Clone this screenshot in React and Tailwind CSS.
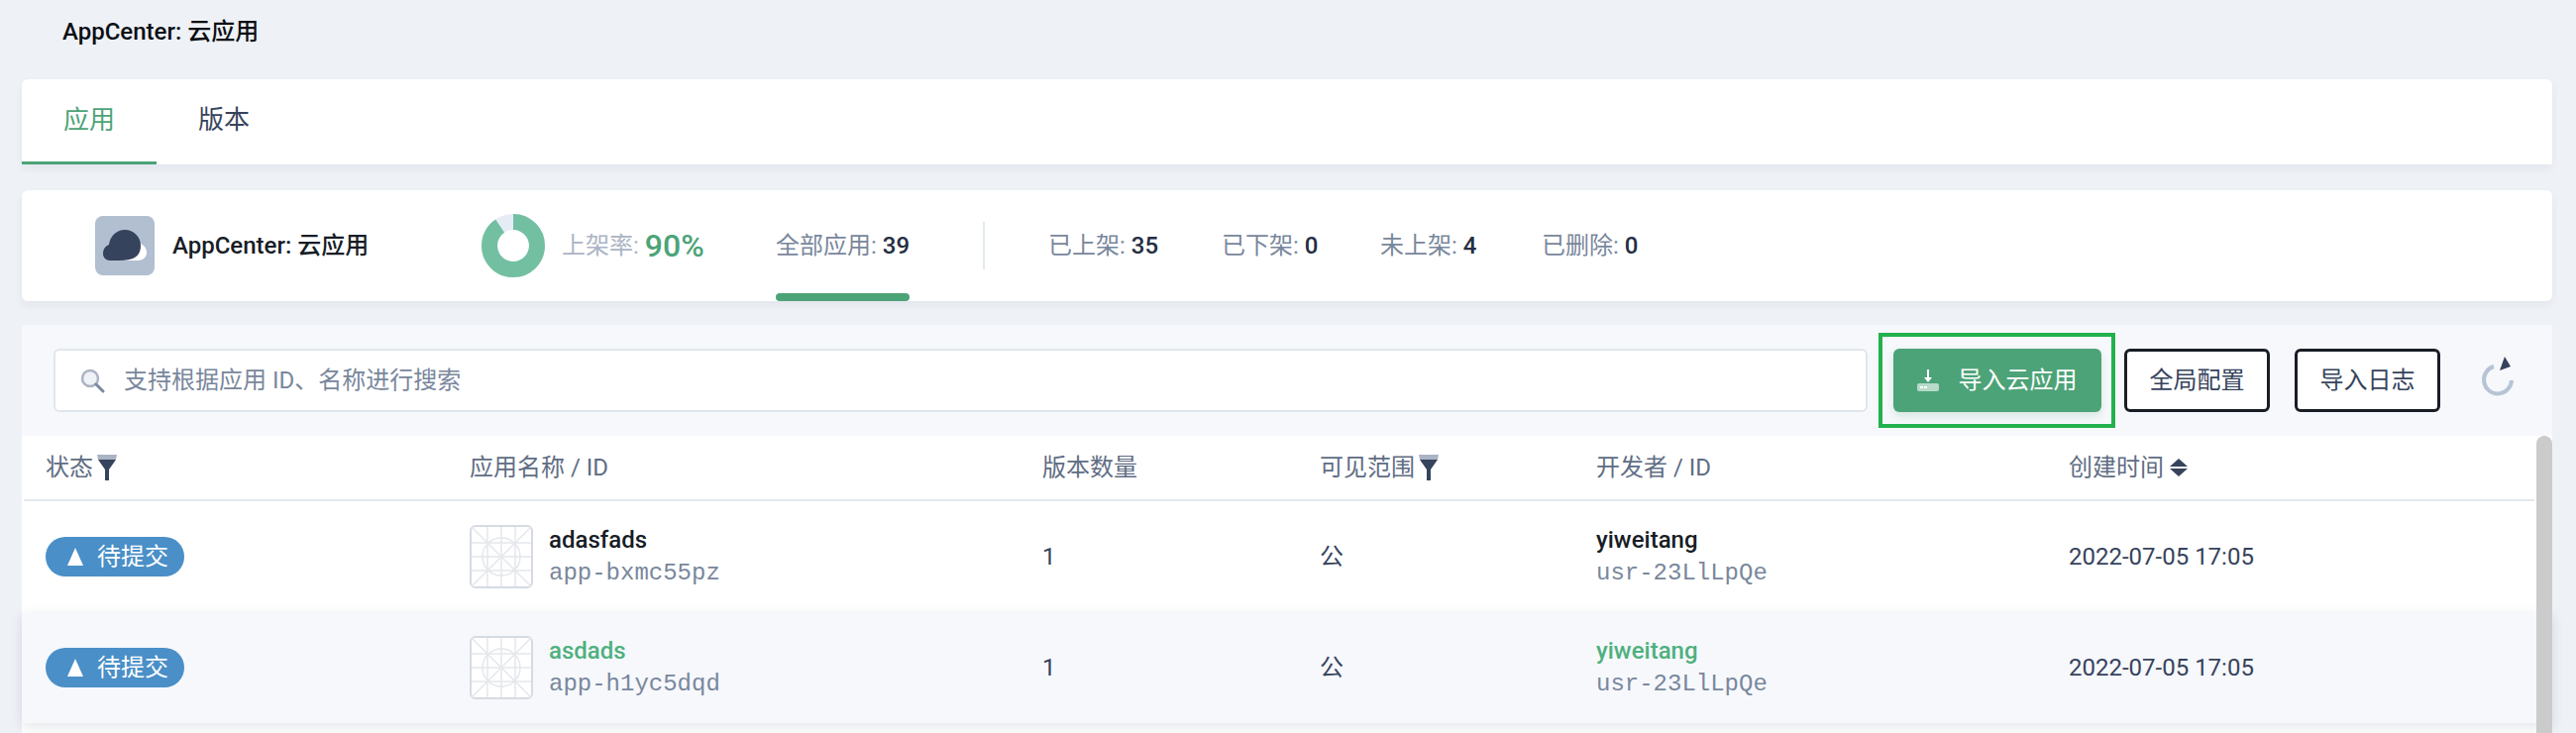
const sans = "font-['Roboto','Noto_Sans_CJK_SC',sans-serif]";

function FilterIcon() {
  return (
    <svg width="20" height="26" viewBox="0 0 20 26" className="shrink-0">
      <path d="M0 0H20L19 5H1Z" fill="#abb4c4" />
      <path d="M1 5H19L12 15V26H8V15Z" fill="#36435c" />
    </svg>
  );
}

function SortIcon() {
  return (
    <svg width="18" height="18" viewBox="0 0 18 18" className="shrink-0">
      <path d="M9 0L18 8H0Z" fill="#36435c" />
      <path d="M0 10H18L9 18Z" fill="#36435c" />
    </svg>
  );
}

function SearchIcon() {
  return (
    <svg width="26" height="26" viewBox="0 0 26 26" fill="none" className="shrink-0">
      <circle cx="11" cy="11" r="8" stroke="#abb4c4" strokeWidth="2.5" fill="#eff2f6" />
      <path d="M17 17L24 24" stroke="#7d8aa0" strokeWidth="3" strokeLinecap="round" />
    </svg>
  );
}

function ImportIcon() {
  return (
    <svg width="22" height="22" viewBox="0 0 22 22" className="shrink-0">
      <path d="M10 0H12V8H15L11 13L7 8H10Z" fill="#fff" />
      <rect x="0" y="14" width="22" height="8" rx="2" fill="#fff" fillOpacity="0.6" />
      <rect x="3" y="17" width="3" height="2" fill="#fff" />
      <rect x="7" y="17" width="3" height="2" fill="#fff" />
    </svg>
  );
}

function RefreshIcon() {
  return (
    <svg width="36" height="40" viewBox="0 0 36 40" fill="none" className="shrink-0">
      <path d="M14 10A14 14 0 1 0 32 24" stroke="#b6c4d6" strokeWidth="4" fill="none" transform="translate(0 0)" />
      <path d="M25 0L31 10L20 14Z" fill="#36435c" />
    </svg>
  );
}

function CloudIcon() {
  return (
    <div className="w-[60px] h-[60px] rounded-[8px] bg-[#b1bfd0] flex items-center justify-center shrink-0">
      <svg width="60" height="60" viewBox="0 0 60 60">
        <path d="M30 45H43C49 45 52 41 52 37C52 33 50 30 46 28L30 28Z" fill="#fff" />
        <path d="M8 38C8 33 11 30 14 29C15 21 21 14 30 14C39 14 46 21 46 30C46 37 43 41 38 43C32 45 26 45 20 45H15C11 45 8 42 8 38Z" fill="#36435c" />
      </svg>
    </div>
  );
}

function Placeholder() {
  return (
    <svg width="64" height="64" viewBox="0 0 64 64" fill="none" className="shrink-0">
      <rect x="1" y="1" width="62" height="62" rx="5" fill="#fff" stroke="#d5dae3" strokeWidth="2" />
      <g stroke="#e4e7ec" strokeWidth="1.5">
        <path d="M2 2L62 62M62 2L2 62" />
        <path d="M18 2V62M32 2V62M46 2V62" />
        <path d="M2 18H62M2 32H62M2 46H62" />
        <circle cx="32" cy="32" r="19" />
      </g>
    </svg>
  );
}

function Donut() {
  return (
    <svg width="64" height="64" viewBox="0 0 64 64" className="shrink-0">
      <circle cx="32" cy="32" r="24" fill="none" stroke="#e5ecf6" strokeWidth="16" />
      <circle
        cx="32"
        cy="32"
        r="24"
        fill="none"
        stroke="#72c0a1"
        strokeWidth="16"
        strokeDasharray="135.7 150.8"
        transform="rotate(-90 32 32)"
      />
    </svg>
  );
}

function Stat({ label, value, className }) {
  return (
    <div className={`text-[24px] text-[#79879c] whitespace-nowrap ${className}`}>
      {label}: <span className="font-medium text-[#242e42]">{value}</span>
    </div>
  );
}

function Badge() {
  return (
    <div className="w-[140px] h-[40px] rounded-full bg-[#4a8fc7] text-white text-[24px] flex items-center pl-[22px] gap-[14px]">
      <svg width="16" height="18" viewBox="0 0 16 18" className="shrink-0">
        <path d="M8 0L16 18H0Z" fill="#fff" />
      </svg>
      <span className="leading-none whitespace-nowrap">待提交</span>
    </div>
  );
}

const cols = "grid grid-cols-[428px_578px_280px_279px_477px_1fr] items-center";

function Row({ name, id, hover }) {
  const nameColor = hover ? "text-[#4fb07e]" : "text-[#181d26]";
  return (
    <div
      className={`${cols} h-[112px] pl-[24px] text-[24px] text-[#36435c] ${
        hover ? "bg-[#f6f8fc] shadow-[0_4px_12px_rgba(36,46,66,0.12)] relative w-full" : "bg-white"
      }`}
    >
      <Badge />
      <div className="flex items-center gap-[16px]">
        <Placeholder />
        <div className="flex flex-col">
          <span className={`font-medium leading-[34px] ${nameColor}`}>{name}</span>
          <span className="font-['Liberation_Mono',monospace] text-[#79879c] leading-[34px]">{id}</span>
        </div>
      </div>
      <div>1</div>
      <div>公</div>
      <div className="flex flex-col">
        <span className={`font-medium leading-[34px] ${nameColor}`}>yiweitang</span>
        <span className="font-['Liberation_Mono',monospace] text-[#79879c] leading-[34px]">usr-23LlLpQe</span>
      </div>
      <div>2022-07-05 17:05</div>
    </div>
  );
}

export default function App() {
  return (
    <div className={`${sans} h-[740px] w-[2600px] overflow-hidden bg-[#eef1f6] pl-[22px] pr-[24px]`}>
      <div className="h-[64px] mb-[16px] pl-[41px] flex items-center text-[24px] font-medium text-[#0c0f14]">
        AppCenter: 云应用
      </div>

      <div className="h-[86px] mb-[26px] bg-white rounded-t-[6px] shadow-[0_4px_8px_rgba(36,46,66,0.06)] flex text-[26px]">
        <div className="w-[136px] flex items-center justify-center text-[#4da378] border-b-[3px] border-[#4da378]">应用</div>
        <div className="w-[136px] flex items-center justify-center text-[#36435c] pb-[3px]">版本</div>
      </div>

      <div className="h-[112px] mb-[24px] bg-white rounded-[6px] shadow-[0_4px_8px_rgba(36,46,66,0.06)] flex items-center pl-[74px]">
        <CloudIcon />
        <div className="ml-[18px] w-[312px] text-[24px] font-medium text-[#181d26] whitespace-nowrap">AppCenter: 云应用</div>
        <Donut />
        <div className="ml-[17px] w-[216px] flex items-center text-[24px] text-[#abb4c4] whitespace-nowrap">
          上架率: <span className="ml-[6px] text-[32px] font-medium text-[#4da378]">90%</span>
        </div>
        <div className="relative h-full w-[209px] flex items-center">
          <Stat label="全部应用" value="39" />
          <div className="absolute left-0 bottom-0 w-[135px] h-[8px] rounded-t-[4px] rounded-b-[4px] bg-[#4da378]" />
        </div>
        <div className="w-[2px] h-[48px] bg-[#e3e9ef] mr-[64px]" />
        <Stat label="已上架" value="35" className="w-[175px]" />
        <Stat label="已下架" value="0" className="w-[160px]" />
        <Stat label="未上架" value="4" className="w-[163px]" />
        <Stat label="已删除" value="0" />
      </div>

      <div className="h-[112px] bg-[#f7f8fb] flex items-center pl-[32px]">
        <div className="w-[1831px] h-[64px] bg-white border-2 border-[#dfe6ee] rounded-[6px] flex items-center pl-[24px] gap-[19px] text-[24px] text-[#79879c]">
          <SearchIcon />
          <span>支持根据应用 ID、名称进行搜索</span>
        </div>
        <div className="ml-[11px] w-[239px] h-[96px] border-[4px] border-[#22b14c] flex items-center justify-center shrink-0">
          <div className="w-[210px] h-[64px] rounded-[6px] bg-[#4da378] shadow-[0_4px_8px_rgba(77,163,120,0.2)] text-white text-[24px] flex items-center pl-[24px] gap-[20px]">
            <ImportIcon />
            <span>导入云应用</span>
          </div>
        </div>
        <div className="ml-[9px] w-[147px] h-[64px] rounded-[6px] bg-white border-[3px] border-[#181d26] text-[#36435c] text-[24px] flex items-center justify-center shrink-0">全局配置</div>
        <div className="ml-[25px] w-[147px] h-[64px] rounded-[6px] bg-white border-[3px] border-[#181d26] text-[#36435c] text-[24px] flex items-center justify-center shrink-0">导入日志</div>
        <div className="ml-[40px] pb-[8px]">
          <RefreshIcon />
        </div>
      </div>

      <div className="relative bg-white h-[300px]">
        <div className={`${cols} h-[66px] ml-[2px] mr-[18px] pl-[22px] border-b-[2px] border-[#e3e9ef] text-[24px] text-[#5f6d84]`}>
          <div className="flex items-center gap-[4px]">状态<FilterIcon /></div>
          <div>应用名称 / ID</div>
          <div>版本数量</div>
          <div className="flex items-center gap-[4px]">可见范围<FilterIcon /></div>
          <div>开发者 / ID</div>
          <div className="flex items-center gap-[6px]">创建时间<SortIcon /></div>
        </div>
        <Row name="adasfads" id="app-bxmc55pz" />
        <Row name="asdads" id="app-h1yc5dqd" hover />
        <div className="absolute right-0 top-0 w-[16px] h-[300px] rounded-t-full bg-[#cbcbcb]" />
      </div>
    </div>
  );
}
